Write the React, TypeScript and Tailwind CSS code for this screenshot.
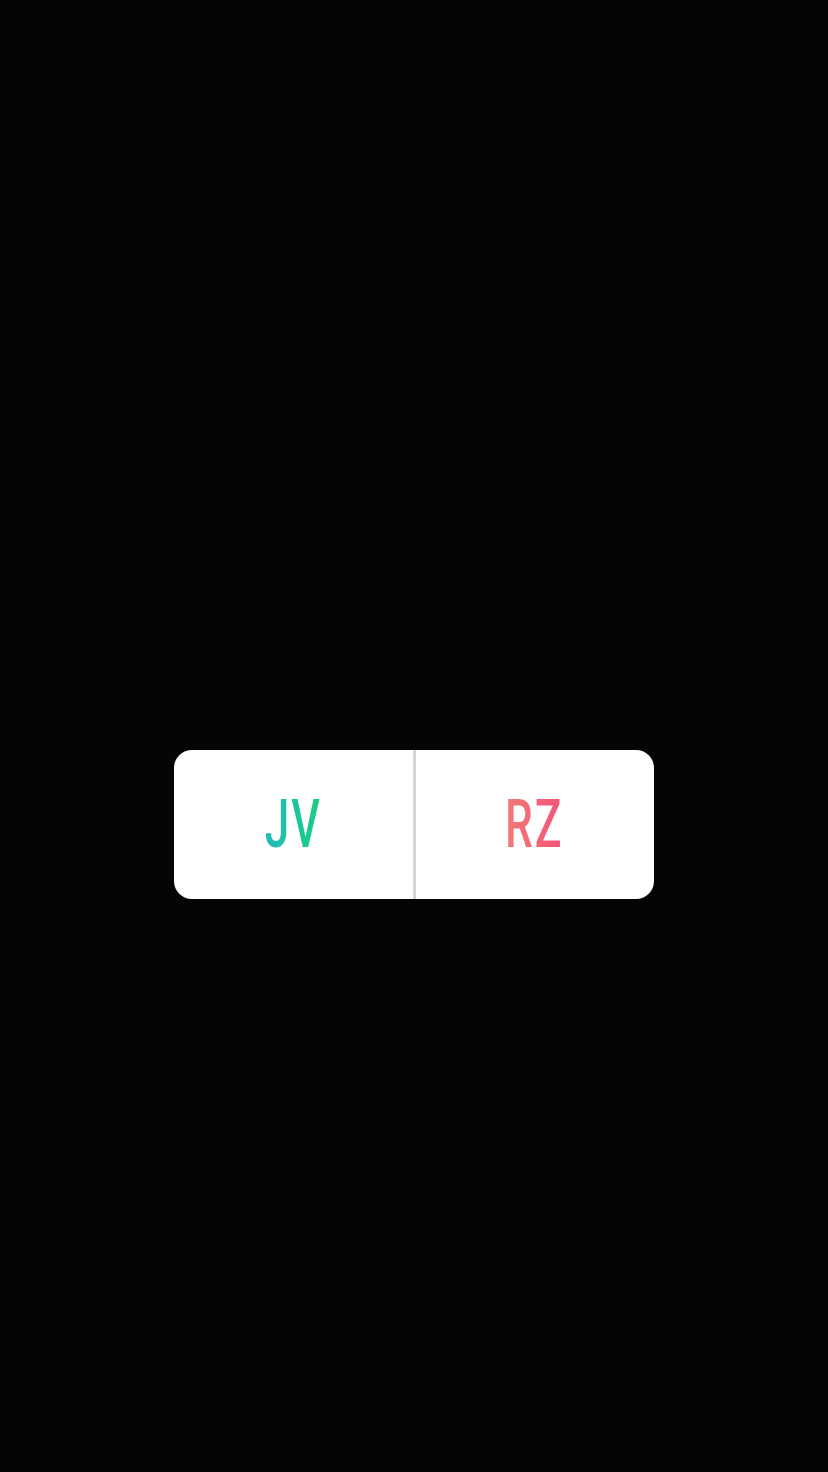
export default function App() {
    return (
        <div className="w-full h-[1472px] bg-[#050507] flex justify-center pt-[750px]">
            <div className="flex flex-row w-[480px] h-[149px] bg-white rounded-[18px] overflow-hidden">
                <div className="flex-1 flex items-center justify-center">
                    <span className="inline-block scale-x-[0.66] font-['Roboto',sans-serif] font-medium text-[67px] leading-none tracking-[3px] bg-gradient-to-r from-[#22bcb6] to-[#1ccd80] bg-clip-text text-transparent">
                        JV
                    </span>
                </div>
                <div className="w-[3px] bg-[#d5d5d5]"></div>
                <div className="flex-1 flex items-center justify-center">
                    <span className="inline-block scale-x-[0.66] font-['Roboto',sans-serif] font-medium text-[67px] leading-none tracking-[3px] bg-gradient-to-r from-[#f07a76] to-[#f2507a] bg-clip-text text-transparent">
                        RZ
                    </span>
                </div>
            </div>
        </div>
    )
}
